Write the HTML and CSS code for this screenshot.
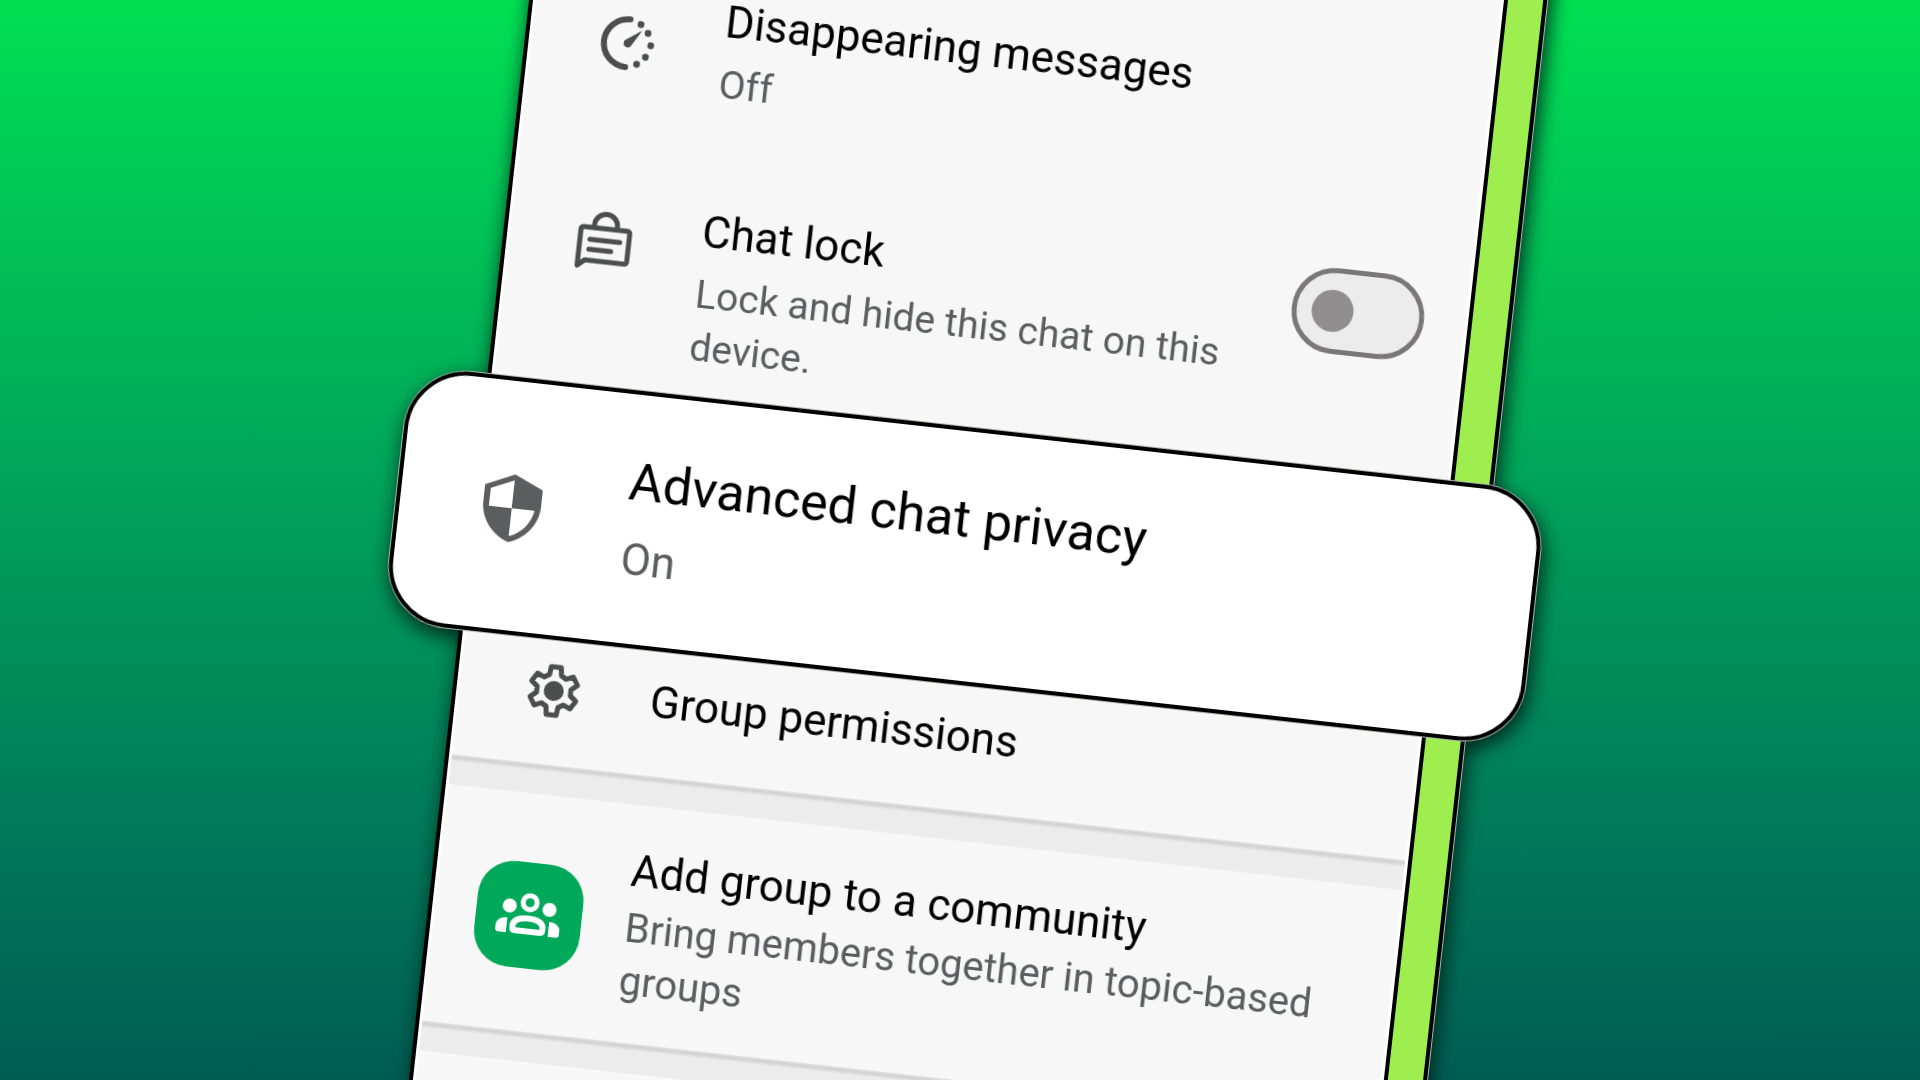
FILE: index.html
```html
<!DOCTYPE html>
<html lang="en">
<head>
    <meta charset="utf-8">
    <title>Group settings</title>
    <link rel="stylesheet" href="styles.css">
</head>
<body>
    <main class="phone">
        <div class="screen">
            <a class="row" href="#">
                <svg class="icon" viewBox="-30 -30 60 60">
                    <path d="M2 -24A24 24 0 1 0 2 24" fill="none" stroke="currentColor" stroke-width="6" stroke-linecap="round"/>
                    <path d="M15 -14L5 3A4 4 0 1 1 -1 -3Z" fill="currentColor"/>
                    <g fill="currentColor">
                        <circle cx="13" cy="-20" r="3.4"/>
                        <circle cx="21" cy="-12" r="3.4"/>
                        <circle cx="25" cy="0" r="3.4"/>
                        <circle cx="21" cy="12" r="3.4"/>
                        <circle cx="13" cy="20" r="3.4"/>
                    </g>
                </svg>
                <div class="text spaced">
                    <h2>Disappearing messages</h2>
                    <p>Off</p>
                </div>
            </a>

            <div class="row lock">
                <svg class="icon" viewBox="-30 -30 60 60" fill="none" stroke="currentColor" stroke-width="5" stroke-linejoin="round">
                    <path d="M-24 27V-9Q-24 -12 -21 -12H22Q25 -12 25 -9V18Q25 21 22 21H-17Z"/>
                    <path d="M-11 -12V-15A11 11 0 0 1 12 -15V-12"/>
                    <path d="M-14 0H16M-14 10H8" stroke-linecap="round"/>
                </svg>
                <label class="text spaced" for="chatLock">
                    <h2>Chat lock</h2>
                    <p>Lock and hide this chat on this device.</p>
                </label>
                <input type="checkbox" class="toggle" id="chatLock">
            </div>

            <a class="card" href="#">
                <svg class="shield" viewBox="0 0 60 70">
                    <path d="M30 1L59 14V31C59 49 46 64 30 69C14 64 1 49 1 31V14Z" fill="currentColor"/>
                    <path d="M30 7V35H7V17Z" fill="#fff"/>
                    <path d="M30 35H53C51 48 42 59 30 63Z" fill="#fff"/>
                </svg>
                <div class="text">
                    <h2>Advanced chat privacy</h2>
                    <p>On</p>
                </div>
            </a>

            <a class="row permissions" href="#">
                <svg class="icon" viewBox="-30 -30 60 60">
                    <path d="M-5 -24H5L6 -16L11 -13L18 -16L23 -8L17 -3V3L23 8L18 16L11 13L6 16L5 24H-5L-6 16L-11 13L-18 16L-23 8L-17 3V-3L-23 -8L-18 -16L-11 -13L-6 -16Z" fill="none" stroke="currentColor" stroke-width="5" stroke-linejoin="round"/>
                    <circle r="10" fill="currentColor"/>
                </svg>
                <div class="text">
                    <h2>Group permissions</h2>
                </div>
            </a>

            <div class="divider"></div>

            <a class="row community" href="#">
                <span class="tile">
                    <svg viewBox="-34 -24 68 48" fill="#fff">
                        <circle cx="0" cy="-13" r="7" fill="none" stroke="#fff" stroke-width="5"/>
                        <circle cx="-20" cy="-8" r="7"/>
                        <circle cx="20" cy="-8" r="7"/>
                        <path d="M-15 14V10Q-13 3 0 3T15 10V14Q15 16 12 16H-12Q-15 16 -15 14Z" fill="none" stroke="#fff" stroke-width="6"/>
                        <path d="M-21 19H-29Q-32 19 -32 16V12Q-31 4 -21 4Z"/>
                        <path d="M21 19H29Q32 19 32 16V12Q31 4 21 4Z"/>
                    </svg>
                </span>
                <div class="text">
                    <h2>Add group to a community</h2>
                    <p>Bring members together in topic-based groups</p>
                </div>
            </a>

            <div class="divider"></div>
        </div>
    </main>
</body>
</html>
```

FILE: styles.css
```css
* {
    box-sizing: border-box;
}
body {
    margin: 0;
    padding-left: 36px;
    height: 100vh;
    overflow: hidden;
    display: flex;
    justify-content: center;
    align-items: center;
    background: linear-gradient(#00e052, #00b158 35%, #008c5a 62%, #005c54);
    font-family: Roboto, sans-serif;
    color: #000;
}
h2,
p {
    margin: 0;
    font-weight: 400;
}
h2 {
    font-size: 44px;
    line-height: 52px;
}
p {
    font-size: 39px;
    line-height: 53px;
    color: #5b5e5e;
}
a {
    color: inherit;
    text-decoration: none;
}
.phone {
    flex: none;
    width: 53.7%;
    padding-right: 35px;
    background: #9fee4f;
    border: solid #000;
    border-width: 0 4px;
    transform: rotate(6.35deg);
    box-shadow: 1px 0 #a9b5a9;
    filter: drop-shadow(3px 7px 10px #00241a);
}
.screen {
    padding: 115px 0 60px;
    background: #f7f7f7;
    border-right: 4px solid #000;
    box-shadow: inset -3px 0 #fff, inset 3px 0 #fff;
}
.row {
    display: flex;
    align-items: center;
    gap: 44px;
    padding: 0 44px;
}
.icon {
    flex: none;
    width: 60px;
    height: 60px;
    margin: 0 23px;
    color: #4a4e4d;
}
.text {
    flex: 1;
}
.spaced p {
    margin-top: 11px;
}
.lock {
    align-items: flex-start;
    padding-top: 87px;
    padding-bottom: 22px;
}
.lock .icon {
    margin-top: 24px;
}
.lock .text {
    margin-top: 8px;
}
.toggle {
    appearance: none;
    flex: none;
    display: flex;
    align-items: center;
    width: 133px;
    height: 86px;
    margin: 0;
    padding-left: 15px;
    background: #ececec;
    border: 5px solid #7b7778;
    border-radius: 43px;
}
.toggle::before {
    content: "";
    width: 42px;
    height: 42px;
    border-radius: 50%;
    background: #918d8e;
}
.toggle:checked {
    justify-content: flex-end;
    padding-right: 15px;
    background: #00a859;
}
.card {
    position: relative;
    display: flex;
    align-items: center;
    gap: 84px;
    margin: 0 -97px 0 -81px;
    padding: 58px 82px 54px;
    background: #fff;
    border: 4px solid #000;
    border-radius: 62px;
    box-shadow: 0 0 0 1px #a9b5a9;
}
.card h2 {
    font-size: 52px;
    line-height: 60px;
}
.card p {
    margin-top: 17px;
    font-size: 44px;
    line-height: 60px;
}
.shield {
    flex: none;
    width: 60px;
    height: 70px;
    color: #5b5e5e;
}
.permissions {
    padding-top: 21px;
    padding-bottom: 44px;
}
.divider {
    height: 30px;
    margin: 0 3px;
    background: linear-gradient(#e4e4e4, #d0d0d0 3px, #ececec 7px);
}
.community {
    padding-top: 40px;
    padding-bottom: 35px;
}
.community p {
    margin-top: 5px;
    font-size: 40px;
}
.tile {
    flex: none;
    display: grid;
    place-items: center;
    width: 106px;
    height: 106px;
    border-radius: 36px;
    background: #00a859;
}
.tile svg {
    width: 68px;
    height: 48px;
}
```
